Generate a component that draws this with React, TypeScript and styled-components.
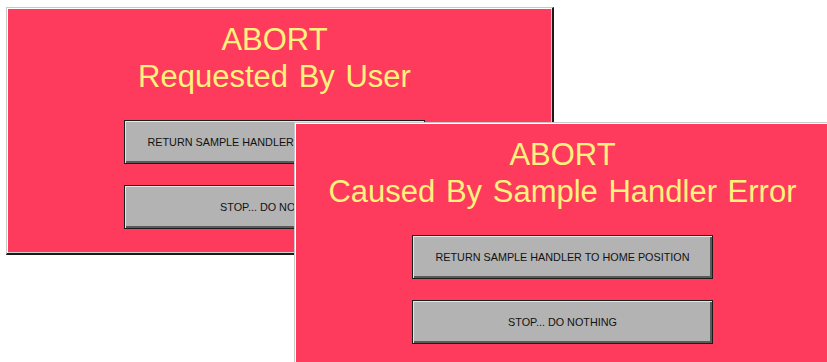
import React from "react";
import styled, { createGlobalStyle } from "styled-components";

const Global = createGlobalStyle`
  html, body { margin: 0; padding: 0; background: #ffffff; }
  body { width: 827px; height: 362px; overflow: hidden; font-family: "Liberation Sans", Arial, sans-serif; }
`;

const Desktop = styled.div`
  position: relative;
  width: 827px;
  height: 362px;
  overflow: hidden;
  background: #ffffff;
`;

const Window = styled.div<{ $left: number; $top: number }>`
  position: absolute;
  left: ${(p) => p.$left}px;
  top: ${(p) => p.$top}px;
  width: 548px;
  height: 248px;
  box-sizing: border-box;
  border-top: 1px solid #c8c8c8;
  border-left: 1px solid #c8c8c8;
  border-right: 2px solid #1a1a1a;
  border-bottom: 2px solid #1a1a1a;
  background: #ff3b5d;
  box-shadow: inset 1px 1px 0 #ffffff, inset -1px -1px 0 #d0d0d0;
  display: flex;
  flex-direction: column;
  align-items: center;
  padding: 1px 11px 0 1px;
`;

const Title = styled.div`
  margin-top: 12px;
  font-family: "Liberation Sans", Arial, sans-serif;
  font-size: 31px;
  line-height: 37px;
  word-spacing: 2px;
  color: #fff27e;
  text-align: center;
  white-space: nowrap;
`;

const Buttons = styled.div`
  margin-top: 25px;
  display: flex;
  flex-direction: column;
  gap: 21px;
`;

const Button = styled.button`
  width: 301px;
  height: 44px;
  box-sizing: border-box;
  background: #b3b3b3;
  border: 1px solid #1c1c1c;
  box-shadow: inset 1px 1px 0 #e6e6e6, inset -2px -2px 0 #5a5a5a;
  font-family: "Liberation Sans", Arial, sans-serif;
  font-size: 10.8px;
  color: #111111;
  padding: 0;
  margin: 0;
  cursor: default;
  display: flex;
  align-items: center;
  justify-content: center;
`;

function AbortDialog({ left, top, reason }: { left: number; top: number; reason: string }) {
  return (
    <Window $left={left} $top={top}>
      <Title>
        ABORT
        <br />
        {reason}
      </Title>
      <Buttons>
        <Button>RETURN SAMPLE HANDLER TO HOME POSITION</Button>
        <Button>STOP... DO NOTHING</Button>
      </Buttons>
    </Window>
  );
}

export default function App() {
  return (
    <>
      <Global />
      <Desktop>
        <AbortDialog left={6} top={7} reason="Requested By User" />
        <AbortDialog left={294} top={122} reason="Caused By Sample Handler Error" />
      </Desktop>
    </>
  );
}
